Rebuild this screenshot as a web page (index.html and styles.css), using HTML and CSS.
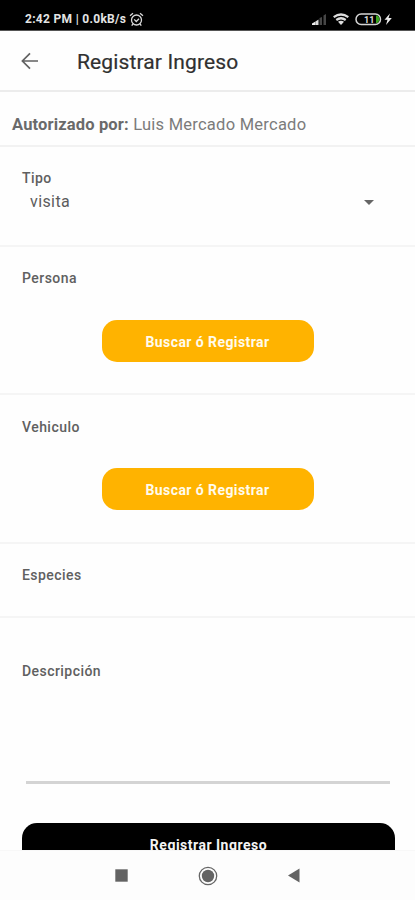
FILE: index.html
```html
<!DOCTYPE html>
<html lang="es">
<head>
<meta charset="utf-8">
<title>Registrar Ingreso</title>
<link rel="stylesheet" href="styles.css">
</head>
<body>
<div class="phone">
  <div class="status">
    <span class="clock">2:42 PM | 0.0kB/s</span>
    <svg class="alarm" width="15" height="15" viewBox="0 0 15 15" fill="none" stroke="#d8d8d8" stroke-width="1.3"><circle cx="7.5" cy="8" r="5"/><path d="M1 3.8 4 1.3M14 3.8 11 1.3M5.2 7.4 7.3 9.5 10 6.8M4 12l-1.3 1.7M11 12l1.3 1.7"/></svg>
    <svg class="radios" width="84" height="16" viewBox="0 0 84 16">
      <path d="M1 14v-1.500l3.500-2V14z" fill="#eee"/><path d="M4.500 14v-3.500l3-2V14z" fill="#ddd"/>
      <path d="M8.500 14V7l2.500-1v8zM12.500 14V4.500l2.500-1.500v11z" fill="#464646"/>
      <g fill="none" stroke="#ddd" stroke-width="2.200"><path d="M22.700 6.200q7.300-5.400 14.600 0M25.300 9q4.700-3.500 9.400 0"/></g>
      <path d="M27 10.700q3-2 6 0L30 14z" fill="#ddd"/>
      <rect x="45" y="3" width="24.500" height="10.500" rx="5.200" fill="none" stroke="#d5d5d5" stroke-width="1.500"/>
      <path d="M65 4.500h1.500q2 1.500 2 3.800t-2 3.700H65z" fill="#38a51e"/>
      <text class="charge" x="53" y="11.500">11</text>
      <path d="m79 2.500-5.500 6.300h3L75 14l5.800-7h-3.300z" fill="#eee"/>
    </svg>
  </div>
  <header class="bar">
    <svg width="18" height="18" viewBox="0 0 18 18" fill="none" stroke="#626262" stroke-width="1.700"><path d="M17 9H1.500M9 1.300 1.400 9 9 16.700"/></svg>
    <h1>Registrar Ingreso</h1>
  </header>
  <main>
    <p class="auth"><b>Autorizado por:</b> <span>Luis Mercado Mercado</span></p>
    <section class="tipo">
      <h2>Tipo</h2>
      <div class="select"><span>visita</span><svg width="10" height="5" viewBox="0 0 10 5"><path d="M0 0h10L5 5z" fill="#666"/></svg></div>
    </section>
    <section class="search"><h2>Persona</h2><button>Buscar ó Registrar</button></section>
    <section class="search vehicle"><h2>Vehiculo</h2><button>Buscar ó Registrar</button></section>
    <section class="species"><h2>Especies</h2></section>
    <section class="desc"><h2>Descripción</h2><div class="field"></div>
      <button class="submit">Registrar Ingreso</button></section>
  </main>
  <nav>
    <svg width="13" height="13" viewBox="0 0 13 13"><path d="M.3.300h12.400v12.400H.3z" fill="#636363"/></svg>
    <svg width="20" height="20" viewBox="0 0 20 20"><circle cx="10" cy="10" r="8.700" fill="none" stroke="#666" stroke-width="1.300"/><circle cx="10" cy="10" r="6.200" fill="#636363"/></svg>
    <svg width="13" height="15" viewBox="0 0 13 15"><path d="M11.500.500v14L0 7.500z" fill="#636363"/></svg>
  </nav>
</div>
</body>
</html>
```
FILE: styles.css
```css
* { box-sizing: border-box; }
body { margin: 0; font-family: Roboto, sans-serif; background: #fefefe; }
h1, h2, p { margin: 0; }
.phone { width: 415px; height: 900px; display: flex; flex-direction: column; overflow: hidden; background: #fefefe; }
.status { height: 31px; flex: none; background: #000; border-bottom: 1px solid #555; display: flex; align-items: center; padding: 8px 20px 0 25px; color: #e4e4e4; }
.clock { font-size: 12px; font-weight: 700; line-height: 16px; width: 104px; letter-spacing: .3px; white-space: nowrap; }
.radios { margin-left: auto; }
.charge { font: 700 9px Roboto, sans-serif; fill: #ddd; }
.bar { height: 61px; flex: none; display: flex; align-items: center; padding: 0 21px; border-bottom: 2px solid #ececec; }
.bar h1 { margin-left: 38px; padding-top: 3px; font-size: 21px; line-height: 28px; font-weight: 400; letter-spacing: .13px; color: #303030; -webkit-text-stroke: .2px #303030; }
main { flex: 1; min-height: 0; overflow: hidden; }
.auth { height: 55px; padding: 22px 12px 0; border-bottom: 2px solid #f2f2f2; font-size: 16.5px; line-height: 22px; color: #7b7b7b; letter-spacing: .25px; white-space: nowrap; }
.auth b { color: #6a6a6a; font-weight: 700; letter-spacing: .15px; }
section { padding: 0 22px; border-bottom: 2px solid #f5f5f5; }
h2 { font-size: 14px; line-height: 20px; font-weight: 500; color: #606060; letter-spacing: .45px; }
.tipo { height: 100px; padding-top: 21px; }
.select { display: flex; justify-content: space-between; align-items: center; padding: 2px 19px 0 8px; font-size: 16px; line-height: 24px; color: #5c5c5c; letter-spacing: .4px; }
.search { height: 148px; padding-top: 21px; }
.search button { display: block; width: 212px; height: 42px; margin: 32px auto 0; padding-top: 1px; }
button { padding: 0; border: 0; border-radius: 15px; background: #ffb300; color: #fffbed; font: 700 14px Roboto, sans-serif; letter-spacing: .42px; }
.vehicle { height: 149px; padding-top: 22px; }
.vehicle button { margin-top: 31px; padding-top: 2px; }
.species { height: 74px; padding-top: 21px; }
.desc { border: 0; padding-top: 43px; }
.field { height: 103px; margin: 0 3px 0 4px; border-bottom: 3px solid #d4d4d4; }
.submit { display: block; width: 373px; height: 44px; margin-top: 39px; background: #000; color: #f4f4f4; letter-spacing: .5px; }
nav { height: 50px; flex: none; display: flex; justify-content: center; align-items: center; gap: 70px; padding-left: 1px; border-top: 1px solid #f8f8f8; background: #fdfdfd; }
```
